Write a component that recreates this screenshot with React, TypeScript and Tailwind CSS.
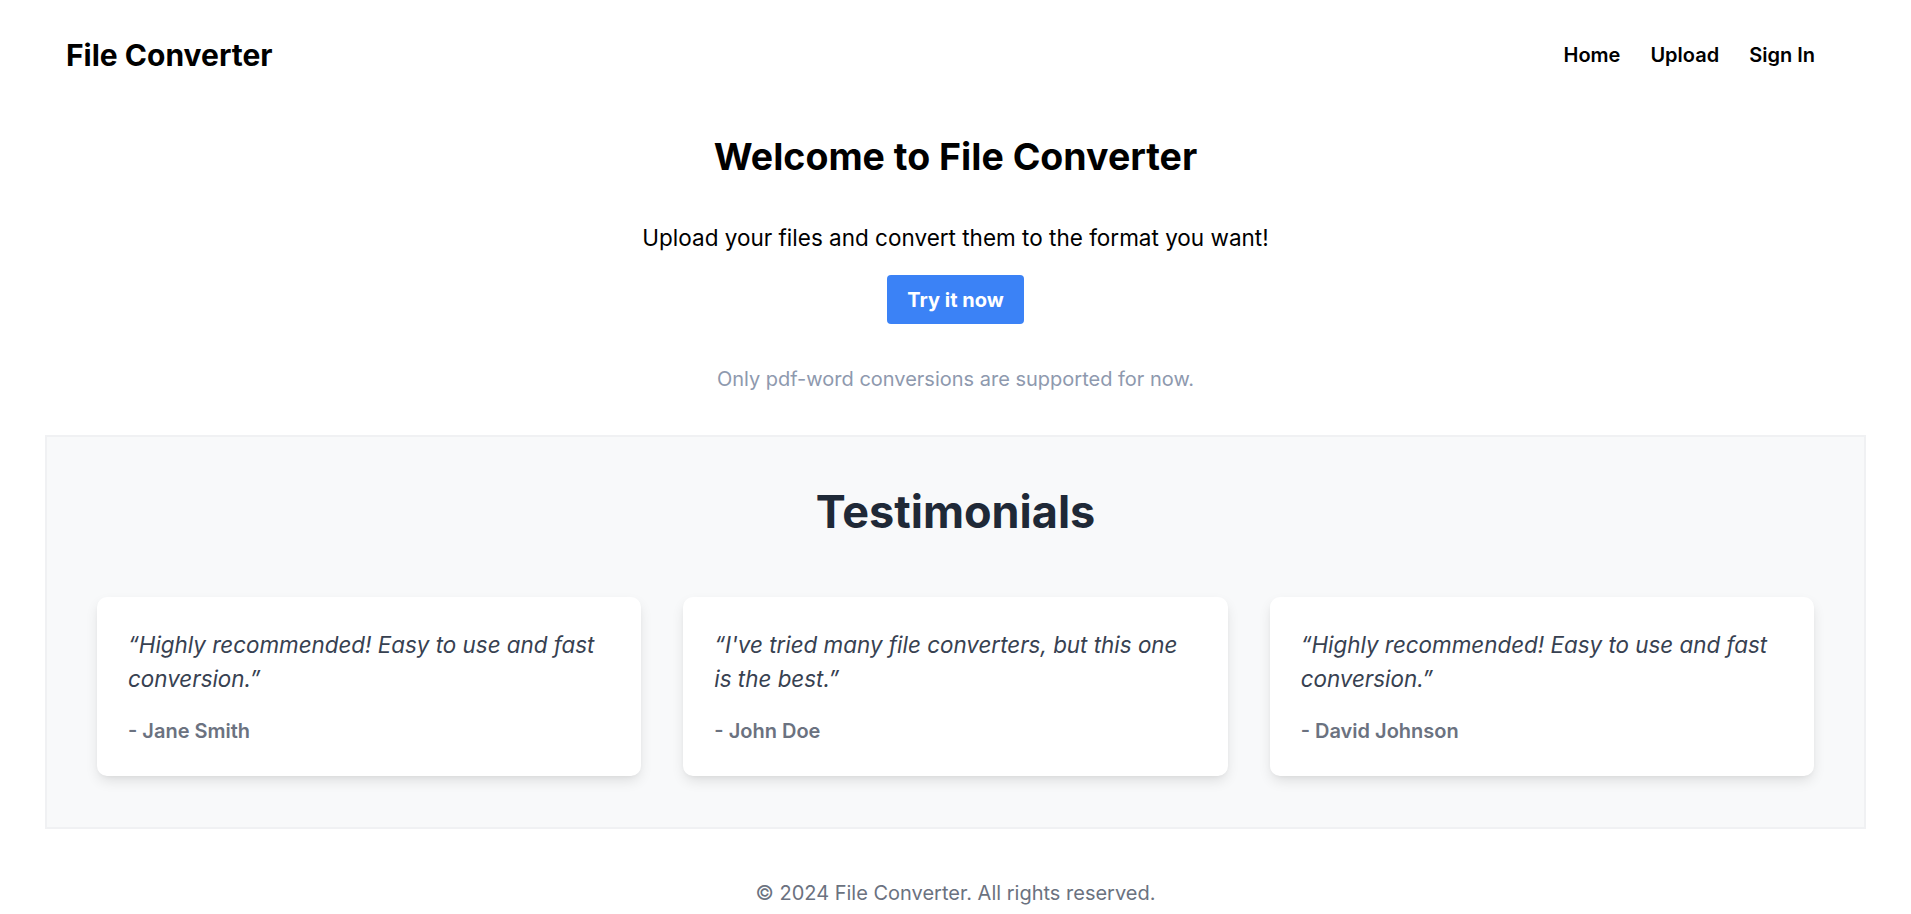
const testimonials = [
  { quote: '“Highly recommended! Easy to use and fast conversion.”', author: '- Jane Smith' },
  { quote: '“I\'ve tried many file converters, but this one is the best.”', author: '- John Doe' },
  { quote: '“Highly recommended! Easy to use and fast conversion.”', author: '- David Johnson' },
];

export default function App() {
  return (
    <div className="min-h-screen bg-white font-['Inter',sans-serif] text-black">
      {/* Header */}
      <header className="flex items-center justify-between h-[110px] pl-[66px] pr-[96px]">
        <h1 className="text-[30px] leading-8 font-bold">File Converter</h1>
        <nav className="flex items-center gap-[30px] text-[20px] leading-7 font-semibold">
          <a href="#">Home</a>
          <a href="#">Upload</a>
          <a href="#">Sign In</a>
        </nav>
      </header>

      {/* Hero */}
      <section className="flex flex-col items-center pt-[27px] text-center">
        <h2 className="text-[37.5px] font-bold leading-10">Welcome to File Converter</h2>
        <p className="mt-[47px] text-[22.5px] leading-7">Upload your files and convert them to the format you want!</p>
        <button className="mt-[23px] h-[49px] px-5 rounded bg-[#3b82f6] text-white text-[20px] leading-7 font-bold">
          Try it now
        </button>
        <p className="mt-[41px] text-[20px] leading-7 text-[#8e99ae]">Only pdf-word conversions are supported for now.</p>
      </section>

      {/* Testimonials */}
      <section className="mx-[45px] mt-[42px] border-2 border-[#f0f1f3] bg-[#f8f9fa] px-[50px] pt-[51px] pb-[51px]">
        <h2 className="text-center text-[45px] leading-[48px] font-bold text-[#1f2937]">Testimonials</h2>
        <div className="mt-[61px] grid grid-cols-3 gap-[42px]">
          {testimonials.map((t, i) => (
            <div key={i} className="h-[179px] rounded-[10px] bg-white px-[31px] pt-[31px] shadow-[0_6px_14px_-2px_rgba(0,0,0,0.12),0_2px_5px_-2px_rgba(0,0,0,0.06)]">
              <p className="text-[22.4px] italic leading-[34px] text-[#374151]">{t.quote}</p>
              <p className="mt-[21px] text-[20px] font-semibold leading-7 text-[#6b7280]">{t.author}</p>
            </div>
          ))}
        </div>
      </section>

      {/* Footer */}
      <footer className="pt-[50px] pb-6 text-center text-[20px] leading-7 text-[#6b7280]">
        © 2024 File Converter. All rights reserved.
      </footer>
    </div>
  );
}
